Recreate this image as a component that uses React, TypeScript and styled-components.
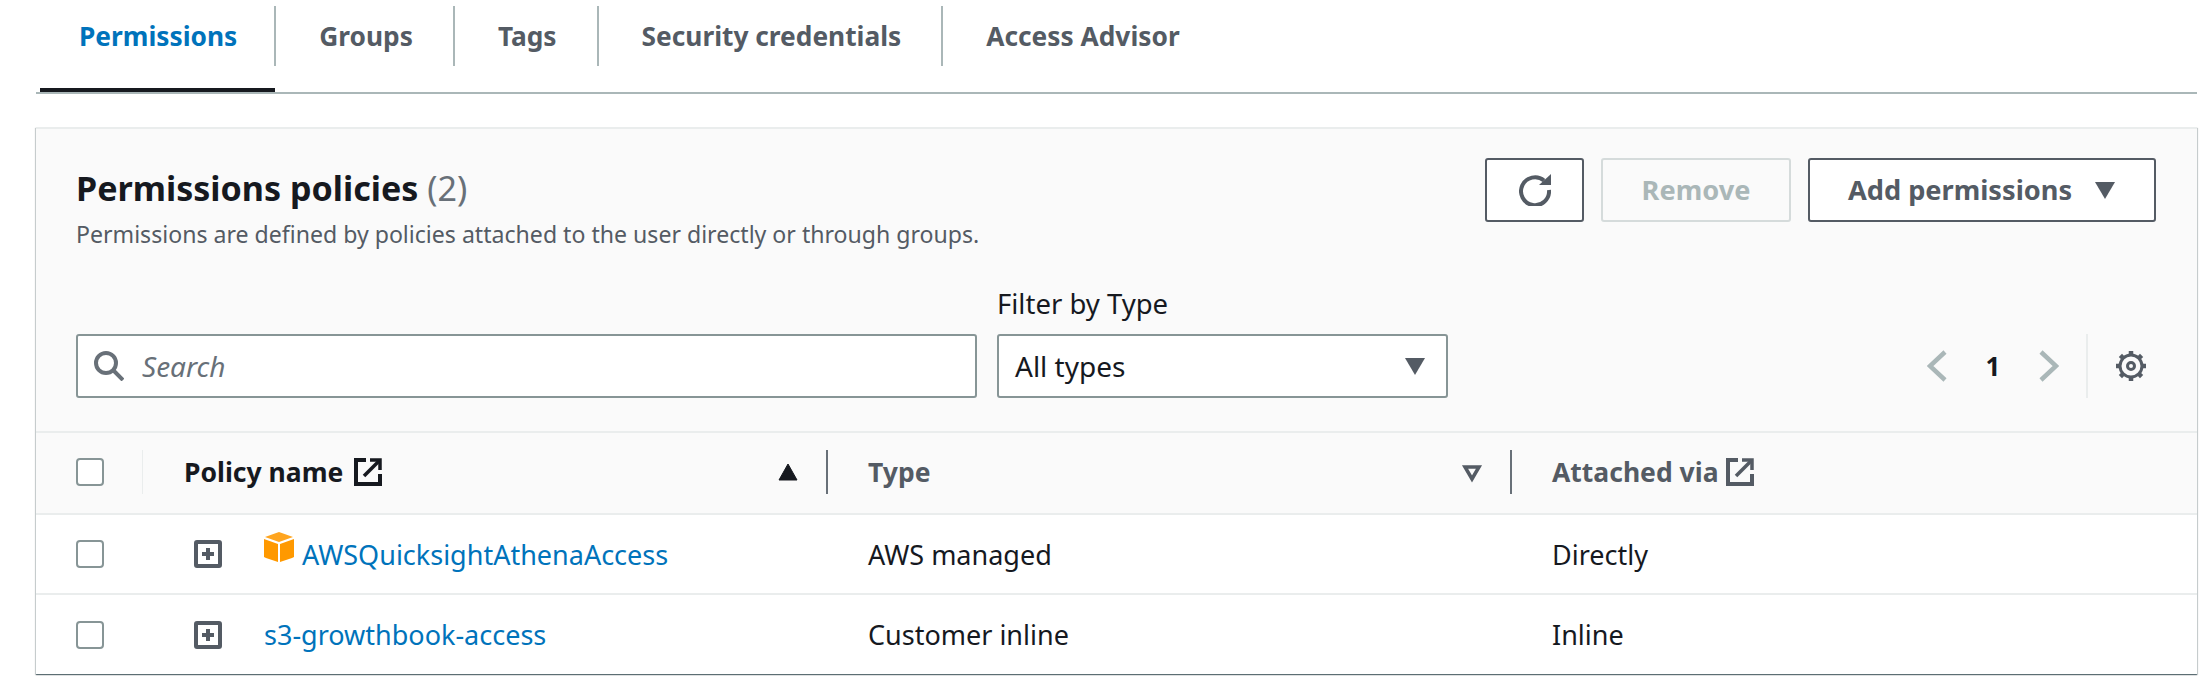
import React from 'react';
import styled, { createGlobalStyle } from 'styled-components';

const GlobalStyle = createGlobalStyle`
    html, body {
        margin: 0;
        background: #fff;
        font-family: "Noto Sans", "Open Sans", sans-serif;
        color: #16191f;
    }
`;

const Page = styled.div`
    width: 2210px;
    height: 690px;
    box-sizing: border-box;
    padding: 0 13px 0 36px;
    overflow: hidden;
`;

const TabBar = styled.div`
    display: flex;
    height: 94px;
    box-sizing: border-box;
    padding: 6px 0 0 4px;
    border-bottom: 2px solid #aab7b8;
`;

const Tab = styled.div<{ $active?: boolean; $last?: boolean }>`
    position: relative;
    height: 60px;
    box-sizing: border-box;
    padding: ${p => (p.$active ? '0 37px 0 39px' : '0 40px 0 43px')};
    display: flex;
    align-items: center;
    font-size: 26.3px;
    font-weight: 700;
    color: ${p => (p.$active ? '#0073bb' : '#545b64')};
    border-right: ${p => (p.$last ? 'none' : '2px solid #aab7b8')};

    ${p => p.$active && `
        &::after {
            content: '';
            position: absolute;
            left: 0;
            right: -1px;
            top: 82px;
            height: 4px;
            background: #16191f;
        }
    `}
`;

const Card = styled.div`
    margin-top: 33px;
    background: #fafafa;
    border-top: 2px solid #eaeded;
    box-shadow: 0 1px 1px 0 rgba(0, 28, 36, 0.5), 1px 1px 1px 0 rgba(0, 28, 36, 0.15), -1px 1px 1px 0 rgba(0, 28, 36, 0.15);
`;

const CardHeader = styled.div`
    display: flex;
    flex-direction: column;
    padding: 29px 41px 0 40px;
    height: 302px;
    box-sizing: border-box;
`;

const TitleRow = styled.div`
    display: flex;
    justify-content: space-between;
    align-items: flex-start;
`;

const TitleText = styled.div`
    padding-top: 9px;
`;

const Title = styled.h2`
    margin: 0;
    font-size: 34.1px;
    line-height: 42px;
    font-weight: 700;

    span {
        font-weight: 400;
        color: #687078;
    }
`;

const Description = styled.div`
    font-size: 23.1px;
    line-height: 30px;
    margin-top: 10px;
    color: #545b64;
`;

const Actions = styled.div`
    display: flex;
    gap: 17px;
`;

const Button = styled.div<{ $disabled?: boolean; $width: number }>`
    width: ${p => p.$width}px;
    height: 64px;
    box-sizing: border-box;
    display: flex;
    align-items: center;
    justify-content: center;
    gap: 22px;
    padding-bottom: 1px;
    border-radius: 3px;
    border: 2px solid ${p => (p.$disabled ? '#d5dbdb' : '#545b64')};
    background: ${p => (p.$disabled ? '#fafafa' : '#fff')};
    color: ${p => (p.$disabled ? '#aab7b8' : '#545b64')};
    font-size: 27.2px;
    font-weight: 700;
`;

const FilterRow = styled.div`
    display: flex;
    align-items: flex-end;
    margin-top: 38px;
`;

const SearchBox = styled.div`
    width: 901px;
    height: 64px;
    box-sizing: border-box;
    display: flex;
    align-items: center;
    gap: 18px;
    padding-left: 16px;
    background: #fff;
    border: 2px solid #879596;
    border-radius: 3px;
`;

const Placeholder = styled.span`
    font-size: 28px;
    font-style: italic;
    color: #687078;
`;

const FilterField = styled.div`
    margin-left: 20px;
`;

const FilterLabel = styled.div`
    font-size: 27.5px;
    line-height: 34px;
    margin-bottom: 13px;
`;

const SelectBox = styled.div`
    width: 451px;
    height: 64px;
    box-sizing: border-box;
    display: flex;
    align-items: center;
    justify-content: space-between;
    padding: 0 20px 0 16px;
    background: #fff;
    border: 2px solid #879596;
    border-radius: 3px;
    font-size: 28px;
`;

const Pager = styled.div`
    margin-left: auto;
    margin-right: 9px;
    height: 64px;
    display: flex;
    align-items: center;
`;

const PageNumber = styled.span`
    width: 92px;
    text-align: center;
    font-size: 26px;
    font-weight: 700;
`;

const PagerDivider = styled.div`
    width: 2px;
    height: 64px;
    margin: 0 27px 0 27px;
    background: #eaeded;
`;

const Row = styled.div<{ $head?: boolean }>`
    display: grid;
    grid-template-columns: 107px 685px 684px 1fr;
    height: ${p => (p.$head ? 82 : 80)}px;
    align-items: center;
    background: ${p => (p.$head ? '#fafafa' : '#fff')};
    border-top: 2px solid #eaeded;
    box-sizing: border-box;
    font-size: 27px;
    padding-bottom: ${p => (p.$head ? 3 : 0)}px;

    &:last-child {
        height: 81px;
    }
`;

const CheckCell = styled.div<{ $divided?: boolean }>`
    height: 44px;
    padding-left: 40px;
    display: flex;
    align-items: center;
    border-right: ${p => (p.$divided ? '1px solid #eaeded' : '1px solid transparent')};
`;

const Checkbox = styled.span`
    width: 28px;
    height: 28px;
    box-sizing: border-box;
    border: 2px solid #879596;
    border-radius: 4px;
    background: #fff;
`;

const HeadCell = styled.div<{ $dark?: boolean; $divided?: boolean; $tight?: boolean }>`
    height: 44px;
    display: flex;
    align-items: center;
    gap: ${p => (p.$tight ? 7 : 11)}px;
    padding: 0 27px 0 40px;
    font-size: 26.5px;
    font-weight: 700;
    color: ${p => (p.$dark ? '#16191f' : '#545b64')};
    border-right: ${p => (p.$divided ? '2px solid #687078' : 'none')};

    &:nth-child(2) {
        padding-left: 41px;
    }
`;

const SortIcon = styled.span`
    margin-left: auto;
    display: flex;
`;

const NameCell = styled.div`
    display: flex;
    align-items: center;
    padding-left: 51px;
`;

const PolicyLink = styled.a`
    color: #0073bb;
    margin-left: 42px;
    text-decoration: none;
`;

const ManagedLink = styled(PolicyLink)`
    margin-left: 8px;
`;

const Cube = styled.svg`
    margin: -14px 0 0 42px;
`;

const BodyCell = styled.div`
    padding-left: 40px;
`;

function ExternalIcon({ color }: { color: string }) {
    return (
        <svg width="28" height="28" viewBox="0 0 28 28" fill="none" stroke={color} strokeWidth="4">
            <path d="M12 2H2v24h24V16" />
            <path d="M10 18L25 3" strokeWidth="3.5" />
            <path d="M16 2h10v10" strokeWidth="3.5" />
        </svg>
    );
}

function ExpandIcon() {
    return (
        <svg width="28" height="28" viewBox="0 0 28 28" fill="none" stroke="#545b64">
            <rect x="2" y="2" width="24" height="24" rx="1" strokeWidth="4" />
            <path d="M14 8v12M8 14h12" strokeWidth="4" />
        </svg>
    );
}

function Caret({ color }: { color: string }) {
    return (
        <svg width="22" height="22" viewBox="0 0 22 22">
            <path d="M1 3h20L11 20z" fill={color} />
        </svg>
    );
}

function GearIcon() {
    const teeth = [0, 45, 90, 135, 180, 225, 270, 315];
    return (
        <svg width="32" height="32" viewBox="0 0 32 32" fill="none" stroke="#545b64">
            <circle cx="16" cy="16" r="11" strokeWidth="3" />
            <circle cx="16" cy="16" r="3.500" strokeWidth="3" />
            {teeth.map(a => (
                <path key={a} d="M16 1v4" strokeWidth="4.500" transform={`rotate(${a} 16 16)`} />
            ))}
        </svg>
    );
}

export default function App() {
    return (
        <Page>
            <GlobalStyle />
            <TabBar>
                <Tab $active>Permissions</Tab>
                <Tab>Groups</Tab>
                <Tab>Tags</Tab>
                <Tab>Security credentials</Tab>
                <Tab $last>Access Advisor</Tab>
            </TabBar>
            <Card>
                <CardHeader>
                    <TitleRow>
                        <TitleText>
                            <Title>Permissions policies <span>(2)</span></Title>
                            <Description>Permissions are defined by policies attached to the user directly or through groups.</Description>
                        </TitleText>
                        <Actions>
                            <Button $width={99}>
                                <svg width="32" height="32" viewBox="0 0 32 32" fill="none" stroke="#545b64" strokeWidth="4">
                                    <path d="M25 6.500A14 14 0 1 0 30 16" />
                                    <path d="M32 0v11H20z" fill="#545b64" stroke="none" />
                                </svg>
                            </Button>
                            <Button $width={190} $disabled>Remove</Button>
                            <Button $width={348}>
                                Add permissions
                                <Caret color="#545b64" />
                            </Button>
                        </Actions>
                    </TitleRow>
                    <FilterRow>
                        <SearchBox>
                            <svg width="30" height="30" viewBox="0 0 30 30" fill="none" stroke="#687078" strokeWidth="4">
                                <circle cx="12" cy="12" r="10" />
                                <path d="M19 19l10 10" />
                            </svg>
                            <Placeholder>Search</Placeholder>
                        </SearchBox>
                        <FilterField>
                            <FilterLabel>Filter by Type</FilterLabel>
                            <SelectBox>
                                All types
                                <Caret color="#545b64" />
                            </SelectBox>
                        </FilterField>
                        <Pager>
                            <svg width="20" height="32" viewBox="0 0 20 32" fill="none" stroke="#aab7b8" strokeWidth="4.500">
                                <path d="M18 2L3 16l15 14" />
                            </svg>
                            <PageNumber>1</PageNumber>
                            <svg width="20" height="32" viewBox="0 0 20 32" fill="none" stroke="#aab7b8" strokeWidth="4.500">
                                <path d="M2 2l15 14L2 30" />
                            </svg>
                            <PagerDivider />
                            <GearIcon />
                        </Pager>
                    </FilterRow>
                </CardHeader>
                <Row $head>
                    <CheckCell $divided><Checkbox /></CheckCell>
                    <HeadCell $dark $divided>
                        Policy name
                        <ExternalIcon color="#16191f" />
                        <SortIcon>
                            <svg width="22" height="22" viewBox="0 0 22 22">
                                <path d="M11 3L20 19H2z" fill="#16191f" stroke="#16191f" strokeLinejoin="round" />
                            </svg>
                        </SortIcon>
                    </HeadCell>
                    <HeadCell $divided>
                        Type
                        <SortIcon>
                            <svg width="22" height="22" viewBox="0 0 22 22" fill="none" stroke="#545b64" strokeWidth="3.500">
                                <path d="M4 6h14l-7 12z" />
                            </svg>
                        </SortIcon>
                    </HeadCell>
                    <HeadCell $tight>
                        Attached via
                        <ExternalIcon color="#545b64" />
                    </HeadCell>
                </Row>
                <Row>
                    <CheckCell><Checkbox /></CheckCell>
                    <NameCell>
                        <ExpandIcon />
                        <Cube width="30" height="30" viewBox="0 0 30 30">
                            <path d="M15 0l14 5-14 5L1 5z" fill="#ffa51f" />
                            <path d="M0 7l14 5v18L2 26l-2-1z" fill="#ff9900" />
                            <path d="M30 7l-14 5v18l12-4 2-1z" fill="#ff9900" />
                        </Cube>
                        <ManagedLink>AWSQuicksightAthenaAccess</ManagedLink>
                    </NameCell>
                    <BodyCell>AWS managed</BodyCell>
                    <BodyCell>Directly</BodyCell>
                </Row>
                <Row>
                    <CheckCell><Checkbox /></CheckCell>
                    <NameCell>
                        <ExpandIcon />
                        <PolicyLink>s3-growthbook-access</PolicyLink>
                    </NameCell>
                    <BodyCell>Customer inline</BodyCell>
                    <BodyCell>Inline</BodyCell>
                </Row>
            </Card>
        </Page>
    );
}
